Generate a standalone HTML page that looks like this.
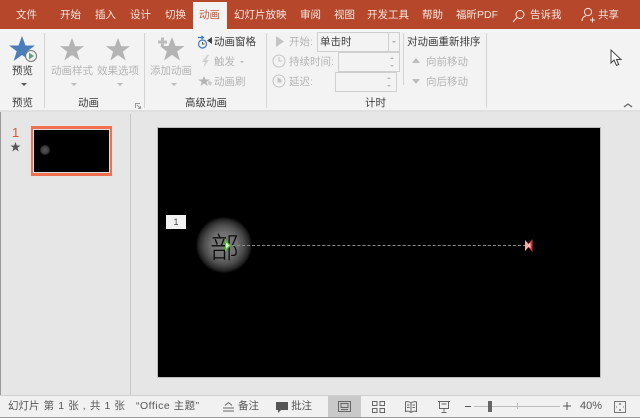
<!DOCTYPE html>
<html><head><meta charset="utf-8"><style>
html,body{margin:0;padding:0;}
body{width:640px;height:418px;position:relative;overflow:hidden;background:#e6e6e6;font-family:"Liberation Sans","Noto Sans CJK SC",sans-serif;font-size:10.5px;color:#444;}
#w{position:absolute;left:0;top:0;width:640px;height:418px;overflow:hidden;filter:blur(.35px);}
.a{position:absolute;white-space:nowrap;line-height:14px;}
.t{color:#f6e6e0;font-size:10.5px;top:8px;}
.d{color:#b4b4b4;font-size:10.5px;}
.k{color:#3c3c3c;font-size:10.5px;}
.v{position:absolute;width:1px;background:#d4d4d4;}
.box{position:absolute;border:1px solid #cfcfcf;box-sizing:border-box;}
svg{position:absolute;overflow:visible;}
.s{color:#555;font-size:10.5px;top:399px;}
</style></head><body><div id="w">
<div class="a" style="left:0;top:0;width:640px;height:29px;background:#b7472a"></div>
<div class="a" style="left:193px;top:2px;width:34px;height:28px;background:#f3f3f3"></div>
<div class="a t" style="left:16px">文件</div>
<div class="a t" style="left:60px">开始</div>
<div class="a t" style="left:95px">插入</div>
<div class="a t" style="left:130px">设计</div>
<div class="a t" style="left:165px">切换</div>
<div class="a t" style="left:199px;color:#c4573a">动画</div>
<div class="a t" style="left:234px">幻灯片放映</div>
<div class="a t" style="left:300px">审阅</div>
<div class="a t" style="left:334px">视图</div>
<div class="a t" style="left:367px">开发工具</div>
<div class="a t" style="left:422px">帮助</div>
<div class="a t" style="left:456px">福昕PDF</div>
<svg style="left:512px;top:9px" width="14" height="14" viewBox="0 0 14 14" fill="none" stroke="#f6e6e0" stroke-width="1"><circle cx="8" cy="5.500" r="4"/><path d="M5 8.500L1 13"/></svg>
<div class="a t" style="left:530px">告诉我</div>
<svg style="left:581px;top:7px" width="14" height="16" viewBox="0 0 14 16" fill="none" stroke="#f6e6e0" stroke-width="1"><circle cx="7" cy="5" r="3.600"/><path d="M1 14c0-3 2-5 4-5M9 13h5M11.500 10.500v5"/></svg>
<div class="a t" style="left:598px">共享</div>

<div class="a" style="left:0;top:29px;width:640px;height:81px;background:#f3f3f3"></div>
<div class="a" style="left:0;top:110px;width:640px;height:2px;background:#e0e0e0"></div>
<div class="v" style="left:44px;top:33px;height:75px"></div>
<div class="v" style="left:144px;top:33px;height:75px"></div>
<div class="v" style="left:266px;top:33px;height:75px"></div>
<div class="v" style="left:403px;top:33px;height:52px"></div>
<div class="v" style="left:486px;top:33px;height:75px"></div>

<svg style="left:9px;top:35px" width="28" height="27" viewBox="0 0 28 27"><path d="M13 1l3.500 9.500h9.500l-7.700 5.800 3 9.700-8.300-6-8.300 6 3-9.700L0 10.500h9.500z" fill="#4a7ebb"/><circle cx="22" cy="21" r="5.500" fill="#f3f3f3" stroke="#777"/><path d="M20 17.500l5 3.500-5 3.500z" fill="#5aa57a"/></svg>
<div class="a k" style="left:12px;top:64px">预览</div>
<div class="a" style="left:21px;top:83px;width:0;height:0;border:3px solid transparent;border-top:3px solid #555"></div>
<div class="a k" style="left:12px;top:96px">预览</div>

<svg style="left:60px;top:37px" width="24" height="24" viewBox="0 0 26 26"><path d="M13 1l3.500 9h9.500l-7.700 5.800 3 9.700-8.300-6-8.300 6 3-9.700L0 10h9.500z" fill="#b4b4b4"/></svg>
<svg style="left:106px;top:37px" width="24" height="24" viewBox="0 0 26 26"><path d="M13 1l3.500 9h9.500l-7.700 5.800 3 9.700-8.300-6-8.300 6 3-9.700L0 10h9.500z" fill="#b4b4b4"/></svg>
<div class="a d" style="left:51px;top:64px">动画样式</div>
<div class="a d" style="left:97px;top:64px">效果选项</div>
<div class="a" style="left:71px;top:83px;width:0;height:0;border:3px solid transparent;border-top:3px solid #bbb"></div>
<div class="a" style="left:117px;top:83px;width:0;height:0;border:3px solid transparent;border-top:3px solid #bbb"></div>
<div class="a k" style="left:78px;top:96px">动画</div>
<svg style="left:135px;top:103px" width="6" height="6" fill="none" stroke="#999"><path d="M.5 5V.5H5M2 2l3.500 3.500M5.500 3v2.500H3"/></svg>

<svg style="left:157px;top:35px" width="28" height="26" viewBox="0 0 28 26"><path d="M15 2l3.500 9h9l-7.300 5.500 2.800 9-8-5.600-8 5.600 2.800-9L3 11h8.500z" fill="#b4b4b4"/><path d="M4 2.500h3v3h3v3H7v3H4v-3H1v-3h3z" fill="#bcbcbc"/></svg>
<div class="a d" style="left:150px;top:64px">添加动画</div>
<div class="a" style="left:171px;top:83px;width:0;height:0;border:3px solid transparent;border-top:3px solid #bbb"></div>
<svg style="left:197px;top:35px" width="16" height="14" viewBox="0 0 16 14" fill="none"><circle cx="5.500" cy="9" r="4" stroke="#3d7ab8" stroke-width="1.200"/><path d="M5.500 7v2h2" stroke="#555"/><path d="M1 2.500h5M4.500 1l2 1.500-2 1.500" stroke="#3d7ab8" stroke-width="1.200"/><path d="M15 2v7l-5-3.500z" fill="#444"/></svg>
<div class="a k" style="left:214px;top:35px">动画窗格</div>
<svg style="left:201px;top:55px" width="9" height="13"><path d="M6 0L1 7h3l-2 6 6-8H5l3-5z" fill="#d2d2d2"/></svg>
<div class="a d" style="left:214px;top:55px">触发</div>
<div class="a" style="left:240px;top:61px;width:0;height:0;border:2px solid transparent;border-top:2px solid #bbb"></div>
<svg style="left:198px;top:75px" width="15" height="13" viewBox="0 0 15 13"><path d="M6 1l1.500 3.500H12L8.500 7l1.300 4L6 8.500 2.500 11l1.200-4L0 4.500h4.500z" fill="#b4b4b4"/><path d="M10 6l4 1-1 4-3-2z" fill="#ccc"/></svg>
<div class="a d" style="left:214px;top:75px">动画刷</div>
<div class="a k" style="left:185px;top:96px">高级动画</div>

<svg style="left:276px;top:36px" width="8" height="11"><path d="M0 0l8 5.500L0 11z" fill="#c4c4c4"/></svg>
<div class="a d" style="left:289px;top:35px">开始:</div>
<div class="box" style="left:317px;top:32px;width:83px;height:20px;background:#f3f3f3"></div>
<div class="v" style="left:388px;top:33px;height:18px;background:#cfcfcf"></div>
<div class="a k" style="left:320px;top:35px">单击时</div>
<div class="a" style="left:392px;top:41px;width:0;height:0;border:2px solid transparent;border-top:2px solid #aaa"></div>
<svg style="left:272px;top:54px" width="14" height="14" fill="none" stroke="#c4c4c4"><circle cx="7" cy="7" r="6"/><path d="M7 3v4h3"/></svg>
<div class="a d" style="left:289px;top:55px">持续时间:</div>
<div class="box" style="left:338px;top:52px;width:62px;height:20px"></div>
<div class="a" style="left:390px;top:55px;width:0;height:0;border:2px solid transparent;border-bottom:2px solid #bbb"></div>
<div class="a" style="left:390px;top:65px;width:0;height:0;border:2px solid transparent;border-top:2px solid #bbb"></div>
<svg style="left:272px;top:74px" width="14" height="14" fill="none" stroke="#c4c4c4"><circle cx="7" cy="7" r="6"/><path d="M6 4v4h3V6z" fill="#c4c4c4"/></svg>
<div class="a d" style="left:289px;top:75px">延迟:</div>
<div class="box" style="left:335px;top:72px;width:62px;height:20px"></div>
<div class="a" style="left:387px;top:75px;width:0;height:0;border:2px solid transparent;border-bottom:2px solid #bbb"></div>
<div class="a" style="left:387px;top:85px;width:0;height:0;border:2px solid transparent;border-top:2px solid #bbb"></div>
<div class="a k" style="left:365px;top:96px">计时</div>
<div class="a k" style="left:407px;top:35px">对动画重新排序</div>
<div class="a" style="left:412px;top:58px;width:0;height:0;border:4px solid transparent;border-top:0;border-bottom:5px solid #bdbdbd"></div>
<div class="a d" style="left:426px;top:55px">向前移动</div>
<div class="a" style="left:412px;top:79px;width:0;height:0;border:4px solid transparent;border-bottom:0;border-top:5px solid #bdbdbd"></div>
<div class="a d" style="left:426px;top:75px">向后移动</div>
<svg style="left:623px;top:102px" width="10" height="6" fill="none" stroke="#666" stroke-width="1.300"><path d="M1 5l4-3 4 3"/></svg>
<svg style="left:610px;top:49px" width="13" height="18" viewBox="0 0 13 18"><path d="M1 1v13l3-3 2.500 5.500 2.200-1L6.500 10.500H11z" fill="#fff" stroke="#444"/></svg>

<div class="a" style="left:0;top:112px;width:1px;height:306px;background:#9a9a9a"></div>
<div class="v" style="left:130px;top:114px;height:281px;background:#c8c8c8"></div>
<div class="a" style="left:12px;top:125px;color:#d2593a;font-size:13px;line-height:16px">1</div>
<svg style="left:10px;top:142px" width="11" height="10" viewBox="0 0 11 10"><path d="M5.500 0l1.300 3.500H10.500L7.500 5.700 8.700 9.500 5.500 7.200 2.300 9.500 3.500 5.700.5 3.500H4.200z" fill="#555"/></svg>
<div class="a" style="left:31px;top:126px;width:81px;height:50px;background:#f0704f"></div>
<div class="a" style="left:33px;top:129px;width:77px;height:44px;background:#000;border:1px solid #ddd;box-sizing:border-box"></div>
<div class="a" style="left:40px;top:145px;width:10px;height:10px;border-radius:50%;background:radial-gradient(circle closest-side,#555,#444 60%,#222)"></div>

<div class="a" style="left:158px;top:128px;width:442px;height:249px;background:#000;outline:1px solid #bdbdbd"></div>
<div class="a" style="left:166px;top:215px;width:20px;height:14px;background:#f2f2f2;color:#444;text-align:center;font-size:9px;line-height:14px">1</div>
<div class="a" style="left:196px;top:217px;width:56px;height:56px;border-radius:50%;background:radial-gradient(circle closest-side,#7c7c7c 0%,#707070 45%,#4a4a4a 72%,#262626 90%,#050505 100%)"></div>
<div class="a" style="left:210px;top:229px;font-size:29px;line-height:34px;color:#0c0c0c;font-family:'Noto Sans CJK SC',sans-serif;font-weight:300">部</div>
<div class="a" style="left:232px;top:245px;width:294px;height:0;border-top:1px dashed #8c8c8c"></div>
<svg style="left:224px;top:239px" width="7" height="13"><path d="M1 0l6 6.500L1 13z" fill="#4fc02e"/><path d="M2 3.500l3.500 3L2 9.500z" fill="#d8ffd0"/></svg>
<svg style="left:525px;top:239px" width="8" height="13"><path d="M0 1l5 5.500L0 12z" fill="#f0b0b0"/><path d="M7.500 0v13L2 6.500z" fill="#e03030"/><path d="M2 6.500l3.500-3v6z" fill="#f6c8c8"/></svg>

<div class="a" style="left:0;top:395px;width:640px;height:1px;background:#cfcfcf"></div>
<div class="a" style="left:0;top:396px;width:640px;height:21px;background:#f1f1f1"></div>
<div class="a" style="left:0;top:417px;width:640px;height:1px;background:#999"></div>
<div class="a s" style="left:8px;word-spacing:1.200px">幻灯片 第 1 张 , 共 1 张</div>
<div class="a s" style="left:136px;letter-spacing:.5px">“Office 主题”</div>
<svg style="left:223px;top:402px" width="11" height="10" fill="none" stroke="#666"><path d="M2 3.500l3.500-3 3.500 3M0 6h11M0 9h11"/></svg>
<div class="a s" style="left:238px">备注</div>
<svg style="left:276px;top:402px" width="12" height="11"><path d="M0 0h12v8H5l-3 3V8H0z" fill="#555"/></svg>
<div class="a s" style="left:291px">批注</div>
<div class="a" style="left:328px;top:396px;width:33px;height:21px;background:#c9c9c9"></div>
<svg style="left:338px;top:401px" width="13" height="11" fill="none" stroke="#666"><rect x=".5" y=".5" width="12" height="10"/><rect x="3" y="2.500" width="7" height="4"/><path d="M3 8.500h7"/></svg>
<svg style="left:372px;top:401px" width="13" height="12" fill="none" stroke="#666"><rect x=".5" y=".5" width="4.500" height="4"/><rect x="8" y=".5" width="4.500" height="4"/><rect x=".5" y="7.500" width="4.500" height="4"/><rect x="8" y="7.500" width="4.500" height="4"/></svg>
<svg style="left:405px;top:401px" width="12" height="12" fill="none" stroke="#666"><path d="M6 2C4 .5 2 .5.500 1v9.500c1.500-.5 3.500-.5 5.500 1 2-1.500 4-1.500 5.500-1V1C10 .5 8 .5 6 2zM6 2v9.500M2 4h2.500M2 6.500h2.500M7.500 4H10M7.500 6.500H10"/></svg>
<svg style="left:438px;top:401px" width="12" height="12" fill="none" stroke="#666"><path d="M0 .5h12M1.500 .5v7h9v-7M6 7.500v3M3.500 11.500h5"/><path d="M3.500 3h5"/></svg>
<div class="a" style="left:465px;top:406px;width:6px;height:1px;background:#555"></div>
<div class="a" style="left:474px;top:406px;width:86px;height:1px;background:#bdbdbd"></div>
<div class="a" style="left:488px;top:401px;width:4px;height:11px;background:#666"></div>
<div class="a" style="left:517px;top:403px;width:1px;height:6px;background:#bbb"></div>
<svg style="left:563px;top:402px" width="8" height="8" stroke="#555"><path d="M0 4h8M4 0v8"/></svg>
<div class="a s" style="left:580px;font-size:11px">40%</div>
<svg style="left:614px;top:401px" width="12" height="12" fill="none" stroke="#777"><rect x=".5" y=".5" width="11" height="11"/><path d="M6 2v2M5 3h2M6 8v2M5 9h2M2 6h1M9 6h1"/></svg>
</div></body></html>
